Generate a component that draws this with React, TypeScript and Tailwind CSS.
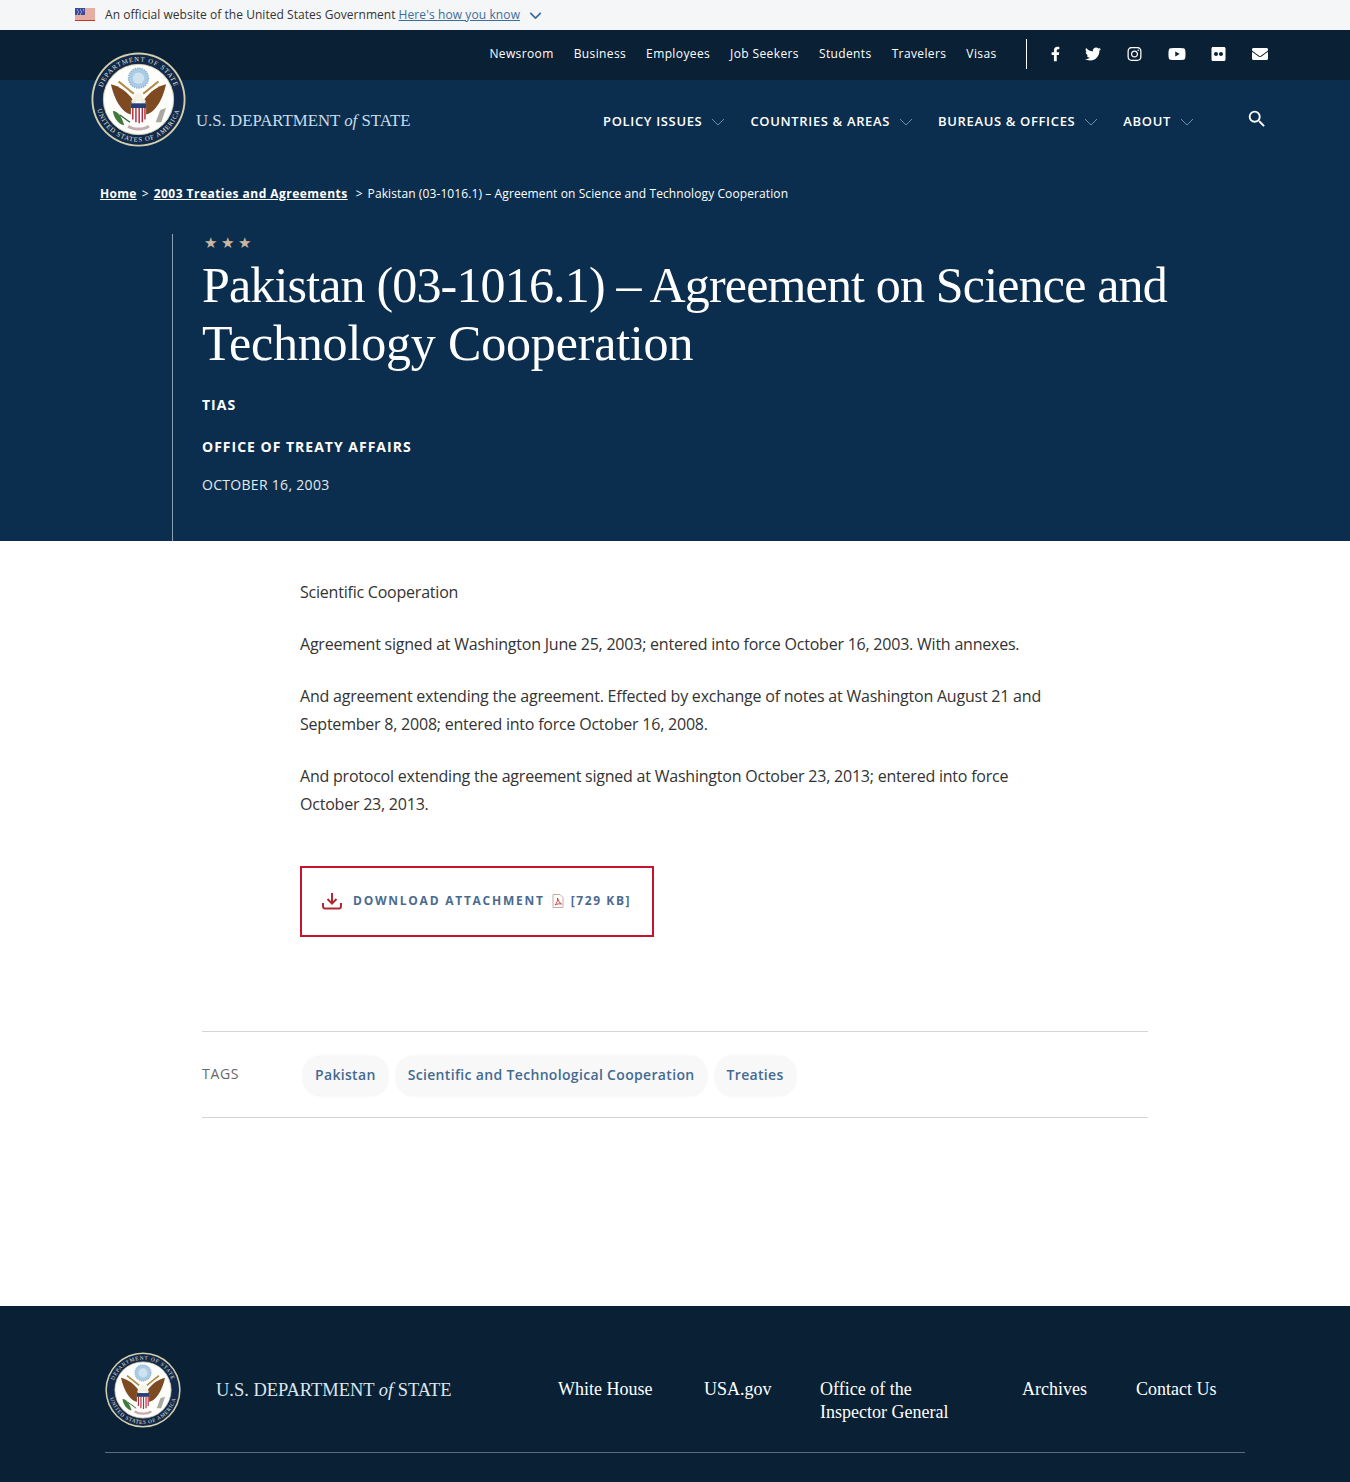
import { FaEnvelope, FaFacebookF, FaFlickr, FaInstagram, FaTwitter, FaYoutube } from "react-icons/fa";
import { MdSearch } from "react-icons/md";

const topLinks = ["Newsroom", "Business", "Employees", "Job Seekers", "Students", "Travelers", "Visas"];
const mainLinks = ["Policy Issues", "Countries & Areas", "Bureaus & Offices", "About"];
const paragraphs = [
  "Scientific Cooperation",
  "Agreement signed at Washington June 25, 2003; entered into force October 16, 2003. With annexes.",
  "And agreement extending the agreement. Effected by exchange of notes at Washington August 21 and September 8, 2008; entered into force October 16, 2008.",
  "And protocol extending the agreement signed at Washington October 23, 2013; entered into force October 23, 2013.",
];
const tags = ["Pakistan", "Scientific and Technological Cooperation", "Treaties"];

function Seal({ className, id }: { className: string; id: string }) {
  return (
    <svg viewBox="0 0 100 100" className={className}>
      <circle cx="50" cy="50" r="49.5" fill="#d3cfae" />
      <circle cx="50" cy="50" r="47.5" fill="#12294a" />
      <circle cx="50" cy="50" r="37" fill="#fdfdfb" stroke="#d3cfae" strokeWidth="1" />
      <defs>
        <path id={`${id}Top`} d="M 10 50 A 40 40 0 0 1 90 50" />
        <path id={`${id}Bottom`} d="M 5.5 50 A 44.5 44.5 0 0 0 94.5 50" />
      </defs>
      <text fontSize="7" fill="#e6e6dc" fontFamily="Liberation Serif, serif" letterSpacing="1.1">
        <textPath href={`#${id}Top`} startOffset="50%" textAnchor="middle">DEPARTMENT OF STATE</textPath>
      </text>
      <text fontSize="7" fill="#e6e6dc" fontFamily="Liberation Serif, serif" letterSpacing="0.9">
        <textPath href={`#${id}Bottom`} startOffset="50%" textAnchor="middle">UNITED STATES OF AMERICA</textPath>
      </text>
      {/* crest */}
      <circle cx="50" cy="27.5" r="10.5" fill="#a9cbe4" stroke="#8fb3cf" strokeWidth="1.5" strokeDasharray="1.5 1" />
      <circle cx="50" cy="27.5" r="6" fill="#cfe2f0" />
      <path d="M29 31 L45 44 M71 31 L55 44" stroke="#b08a45" strokeWidth="2.2" />
      {/* wings */}
      <path d="M21 34 C30 36 38 42 44 50 L44 66 C34 66 25 52 21 34 Z" fill="#7d4a22" />
      <path d="M79 34 C70 36 62 42 56 50 L56 66 C66 66 75 52 79 34 Z" fill="#7d4a22" />
      <circle cx="50" cy="48" r="4.5" fill="#f4f1e6" />
      <circle cx="45" cy="52" r="2.5" fill="#efeadb" />
      <circle cx="55" cy="52" r="2.5" fill="#efeadb" />
      {/* shield */}
      <path d="M42 54 H58 V68 C58 72 53 75 50 76 C47 75 42 72 42 68 Z" fill="#fff" />
      <path d="M42 54 H58 V59 H42 Z" fill="#263f77" />
      <path d="M44 59 V71 M47.3 59 V74 M50.7 59 V75 M54 59 V74 M56.8 59 V71" stroke="#b3283a" strokeWidth="1.5" />
      {/* olive branch and arrows */}
      <path d="M23 62 C29 62 33 70 35 77 C29 76 24 70 23 62 Z" fill="#3f7a3a" />
      <path d="M30 66 L41 74" stroke="#2f5f2c" strokeWidth="1.2" />
      <path d="M79 59 L74 74 L68 74 L73 61 Z" fill="#a9a9a2" />
      <path d="M39 78 C44 82 56 82 61 78" stroke="#c5adb0" strokeWidth="3" fill="none" />
    </svg>
  );
}

function Flag() {
  return (
    <svg viewBox="0 0 20 13" className="mb-[2px] h-[13px] w-5 shrink-0">
      <rect width="20" height="13" fill="#f3ece8" />
      <path d="M0 1h20M0 3h20M0 5h20M0 7h20M0 9h20M0 11h20" stroke="#d9705f" strokeWidth="1" />
      <path d="M0 12.5h20" stroke="#c5362c" strokeWidth="1" />
      <rect width="10" height="7" fill="#3c4a9a" />
      <path d="M2 2h1M5 2h1M8 2h1M3 4h1M6 4h1M2 6h1M5 6h1" stroke="#dfe3f5" strokeWidth="1" />
    </svg>
  );
}

function Chevron({ className }: { className: string }) {
  return (
    <svg viewBox="0 0 14 8" fill="none" stroke="currentColor" className={className}>
      <path d="M1 1 L7 7 L13 1" />
    </svg>
  );
}

export default function App() {
  return (
    <div className="min-h-[1482px] bg-white font-['Open_Sans',sans-serif]">
      {/* Gov banner */}
      <div className="flex h-[30px] items-center bg-[#f5f6f7] pl-[75px] text-[12px] text-[#333]">
        <Flag />
        <span className="ml-2.5 tracking-[0.04px]">An official website of the United States Government</span>
        <span className="ml-[3px] tracking-[0.1px] text-[#3d6d9c] underline">Here's how you know</span>
        <Chevron className="ml-[9px] h-[7px] w-[13px] text-[#3d6d9c] [stroke-width:2]" />
      </div>

      <header className="relative">
        {/* Utility bar */}
        <div className="flex h-[50px] items-center justify-end bg-[#0a2135] pb-[2px] pr-[82px] text-white">
          <nav className="flex gap-[20px] text-[12px] tracking-[0.38px]">
            {topLinks.map((link) => (
              <span key={link}>{link}</span>
            ))}
          </nav>
          <div className="ml-[29px] h-[30px] w-px bg-white" />
          <div className="ml-6 flex items-center gap-[25.7px] text-[16px]">
            <FaFacebookF className="h-4 w-[9px]" />
            <FaTwitter className="h-4 w-4" />
            <FaInstagram className="h-4 w-[15px]" />
            <FaYoutube className="h-4 w-[18px]" />
            <FaFlickr className="h-4 w-[15px]" />
            <FaEnvelope className="h-4 w-4" />
          </div>
        </div>

        <Seal id="head" className="absolute left-[91px] top-[22px] h-[95px] w-[95px]" />

        {/* Hero */}
        <div className="bg-[#0c2e4e] text-white">
          <div className="flex h-[81px] items-center pb-[1px] pl-[196px] pr-[82px] pt-[2px]">
            <div className="whitespace-nowrap font-['Liberation_Serif',serif] text-[16.8px] text-[#c9dcea]">
              U.S. DEPARTMENT <i>of</i> STATE
            </div>
            <nav className="ml-auto mt-[2px] flex items-center text-[13px] font-semibold uppercase tracking-[0.65px]">
              {mainLinks.map((link) => (
                <span key={link} className="mr-[25px] flex items-center gap-[9px] last:mr-0">
                  {link}
                  <Chevron className="h-2 w-[14px] text-[#6f8ba3]" />
                </span>
              ))}
            </nav>
            <MdSearch className="-mt-1 ml-[52px] h-[22px] w-[22px]" />
          </div>

          <div className="mt-5 flex h-[24px] items-center pl-[100px] pt-[2px] text-[12px] tracking-[0.1px]">
            <span className="font-bold tracking-[0.3px] underline">Home</span>
            <span className="mx-[5px]">&gt;</span>
            <span className="font-bold tracking-[0.47px] underline">2003 Treaties and Agreements</span>
            <span className="ml-[8px] mr-[5px]">&gt;</span>
            <span>Pakistan (03-1016.1) – Agreement on Science and Technology Cooperation</span>
          </div>

          <div className="ml-[172px] mt-[29px] h-[307px] border-l border-[#8ba1b3] pl-[29px] pr-[150px]">
            <div className="flex h-[19px] gap-1 pl-[2px] text-[15px] leading-[17px] text-[#cdb79e]">
              <span>★</span>
              <span>★</span>
              <span>★</span>
            </div>
            <h1 className="mt-[3px] font-['Liberation_Serif',serif] text-[50px] leading-[58px]">
              <span className="block tracking-[-0.83px]">Pakistan (03-1016.1) – Agreement on Science and</span>
              <span className="block tracking-[-0.17px]">Technology Cooperation</span>
            </h1>
            <div className="mt-[23px] text-[14px] font-bold uppercase leading-5 tracking-[1px]">TIAS</div>
            <div className="mt-[22px] text-[14px] font-bold uppercase leading-5 tracking-[1px]">Office of Treaty Affairs</div>
            <div className="mt-[18px] text-[14px] uppercase leading-5 tracking-[0.3px] text-[#e3e9ee]">October 16, 2003</div>
          </div>
        </div>
      </header>

      <main>
        <div className="ml-[300px] w-[760px] pt-[37px] text-[16px] leading-[28px] tracking-[-0.22px] text-[#333]">
          {paragraphs.map((text) => (
            <p key={text} className="mb-6">
              {text}
            </p>
          ))}
          <div className="mt-[48px] flex h-[71px] w-[354px] items-center border-2 border-[#c4142e] pb-[2px] pl-5">
            <svg viewBox="0 0 20 18" className="h-[18px] w-5 text-[#b02a2f]" fill="none" stroke="currentColor" strokeWidth="2">
              <path d="M10 1 V11 M5.5 7 L10 11.5 L14.5 7" />
              <path d="M1 11 V14 C1 16 2 16.5 3 16.5 H17 C18 16.5 19 16 19 14 V11" />
            </svg>
            <span className="ml-[11px] text-[12px] font-bold uppercase tracking-[1.75px] text-[#4a6b8f]">Download Attachment</span>
            <svg viewBox="0 0 12 14" className="ml-[7px] h-[14px] w-3" fill="none">
              <path d="M1 .5 H8 L11 3.5 V13.5 H1 Z" fill="#fff" stroke="#c9a9a0" />
              <path d="M3 11 C5 9 6 6 5.5 4 C6.5 7 7.5 9 9.5 10 C7 9.5 5 10 3 11 Z" stroke="#c8312b" strokeWidth="0.9" />
            </svg>
            <span className="ml-[7px] text-[12px] font-bold tracking-[1.6px] text-[#4a6b8f]">[729 KB]</span>
          </div>
        </div>

        <div className="mx-[202px] mt-[94px] flex h-[87px] items-center border-y border-[#d4d4d4]">
          <span className="mb-[2px] w-[98px] text-[14px] uppercase tracking-[0.7px] text-[#666]">Tags</span>
          <div className="ml-[3px] mt-[2px] flex gap-2">
            {tags.map((tag) => (
              <span
                key={tag}
                className="flex h-10 items-center rounded-[18px] bg-[#f8f8f8] px-3 pb-[2px] text-[14px] font-semibold tracking-[0.33px] text-[#436a92] shadow-[0_0_3px_rgba(0,0,0,0.06)]"
              >
                {tag}
              </span>
            ))}
          </div>
        </div>
      </main>

      <footer className="mt-[188px] h-[176px] bg-[#0a2135] px-[105px] text-white">
        <div className="flex h-[147px] items-start border-b border-[#5b6c7c] pt-[46px]">
          <Seal id="foot" className="h-[76px] w-[76px] shrink-0" />
          <div className="ml-[35px] mt-[26px] w-[342px] shrink-0 whitespace-nowrap font-['Liberation_Serif',serif] text-[18.45px] leading-6 text-[#dbe6ef]">
            U.S. DEPARTMENT <i>of</i> STATE
          </div>
          <div className="mt-[26px] flex font-['Liberation_Serif',serif] text-[18px] leading-[23px]">
            <span className="w-[146px]">White House</span>
            <span className="w-[116px]">USA.gov</span>
            <span className="w-[202px] pr-[50px]">Office of the Inspector General</span>
            <span className="w-[114px]">Archives</span>
            <span>Contact Us</span>
          </div>
        </div>
      </footer>
    </div>
  );
}
